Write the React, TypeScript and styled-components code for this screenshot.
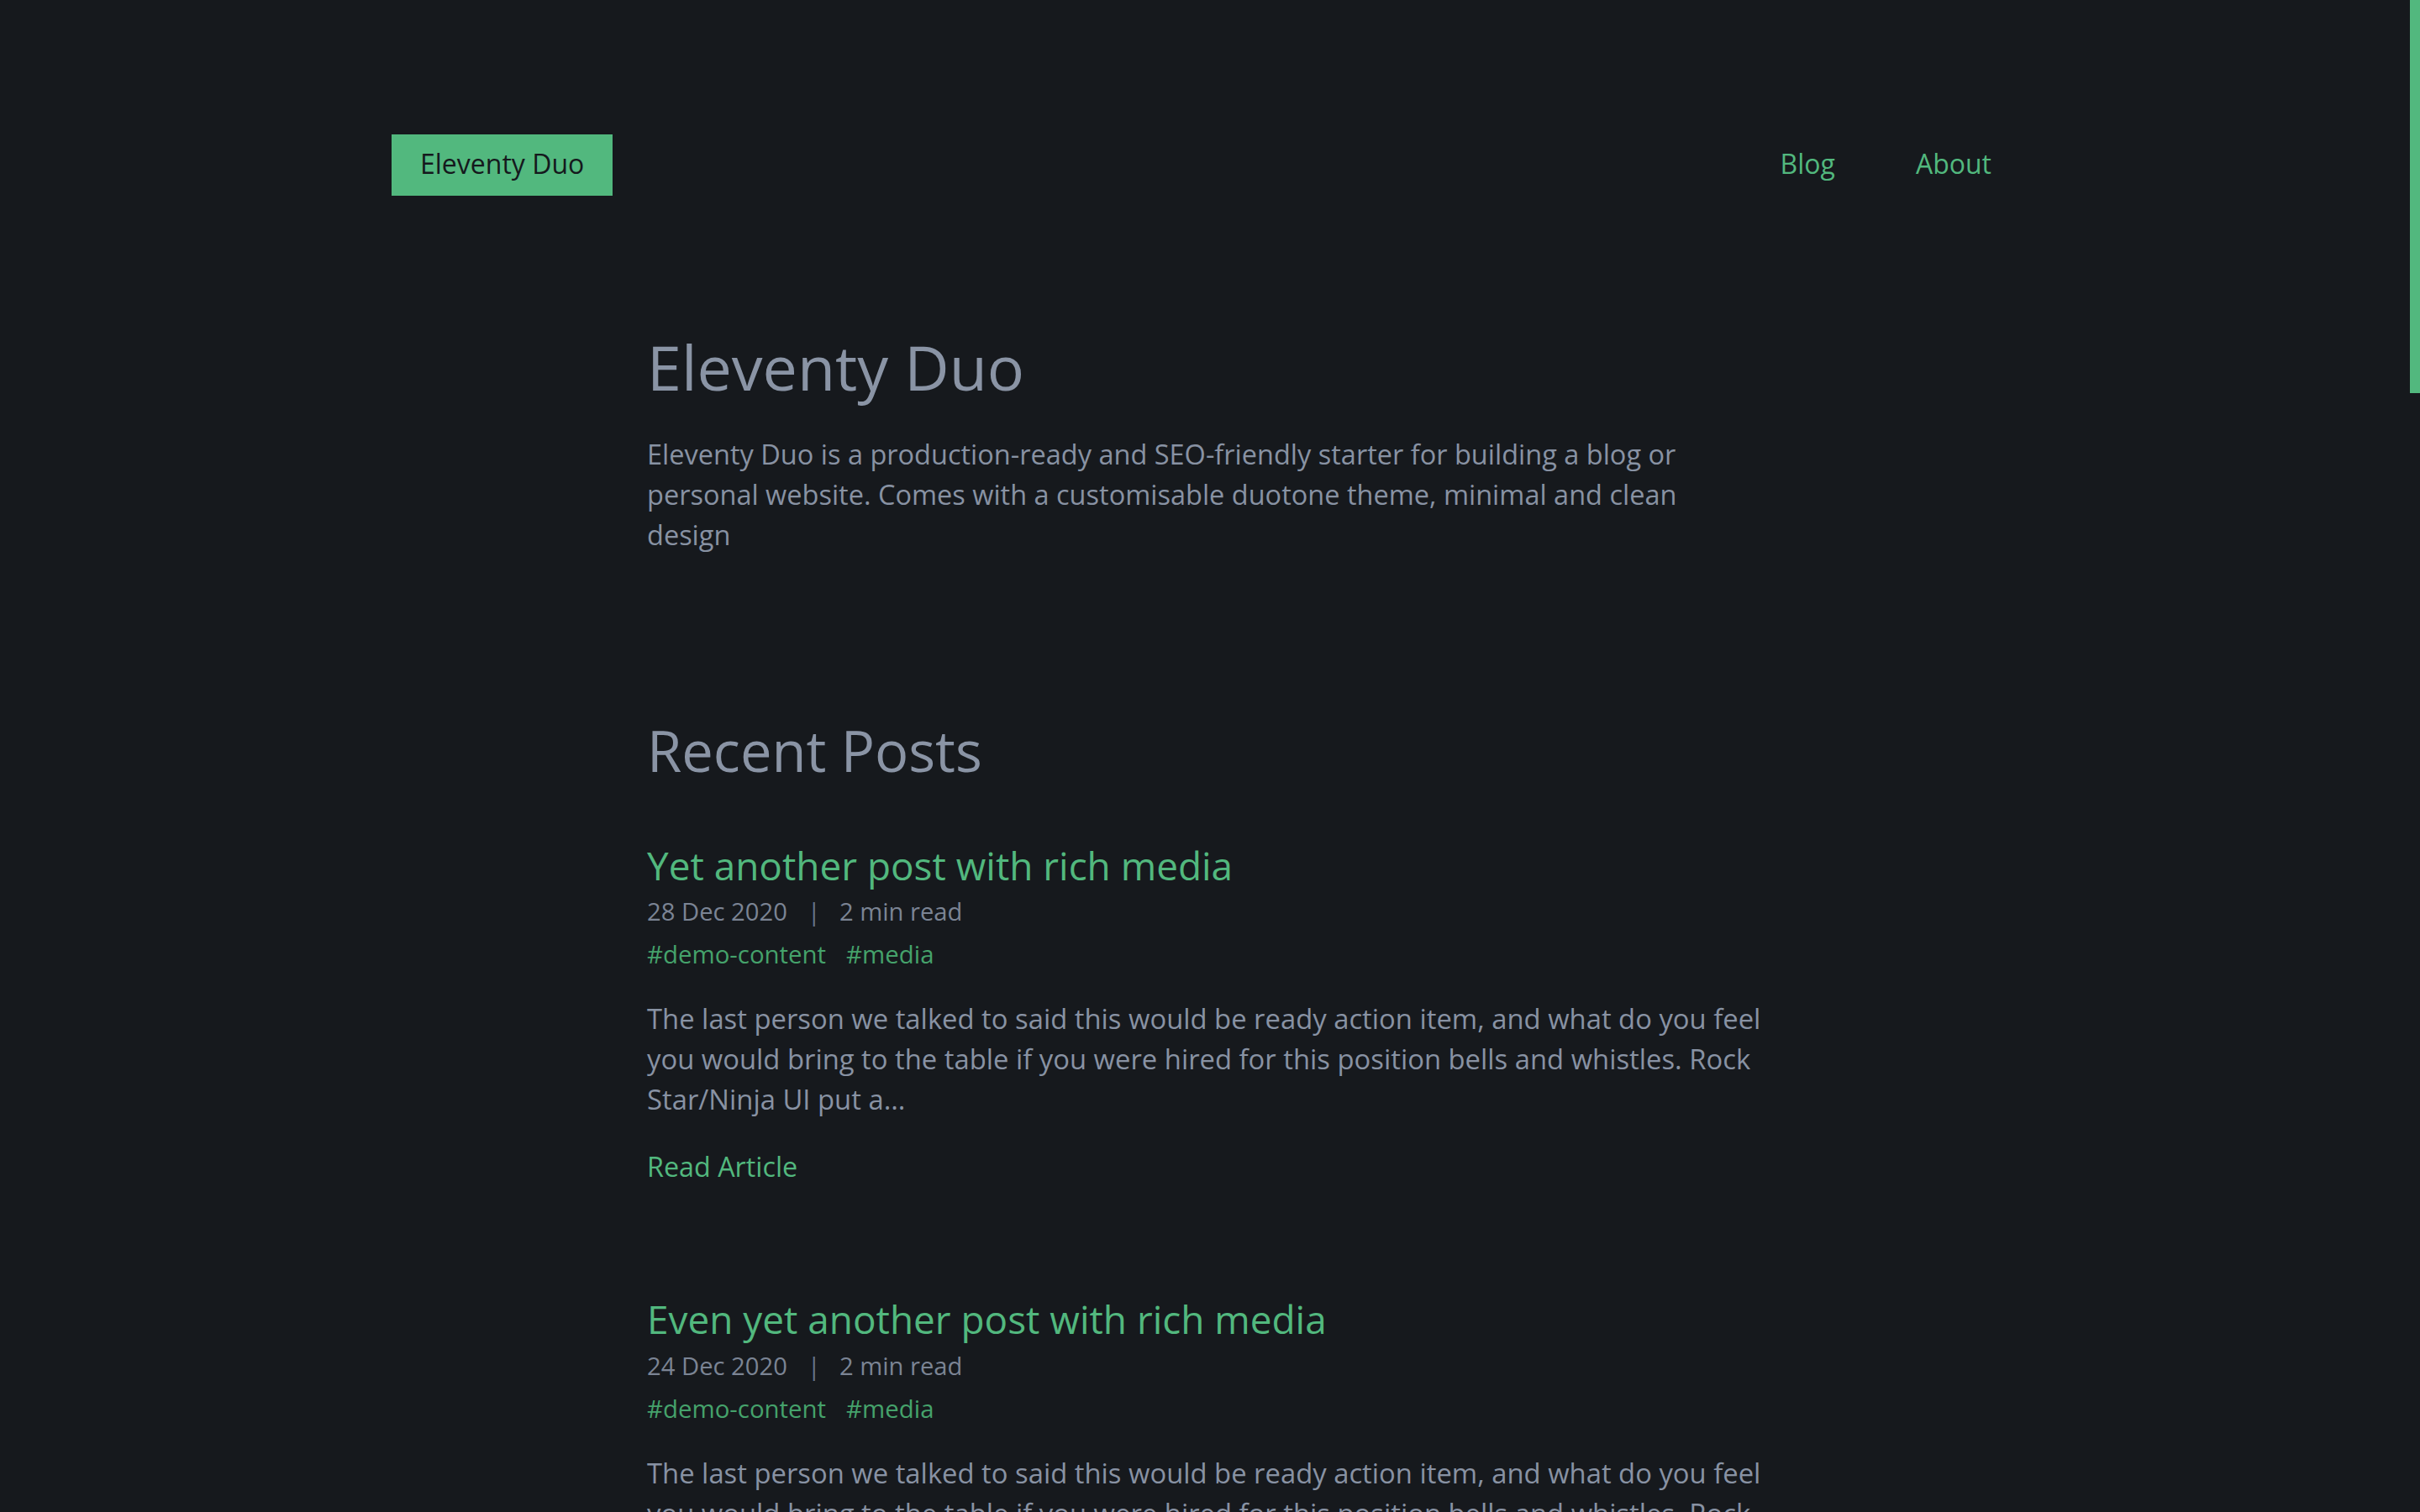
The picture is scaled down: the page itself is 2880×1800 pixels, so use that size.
import React from "react";
import styled, { createGlobalStyle } from "styled-components";

const GlobalStyle = createGlobalStyle`
  html, body {
    margin: 0;
    padding: 0;
    background: #16191d;
  }
  html {
    scrollbar-width: none;
  }
  ::-webkit-scrollbar {
    width: 0;
    display: none;
  }
  body {
    font-family: "Open Sans", "Noto Sans", sans-serif;
    color: #8892a3;
    -webkit-font-smoothing: antialiased;
  }
  a {
    text-decoration: none;
  }
`;

const Page = styled.div`
  display: flex;
  flex-direction: column;
  align-items: center;
  padding: 160px 12px 80px 0;
`;

const ScrollThumb = styled.div`
  position: fixed;
  top: 0;
  right: 0;
  width: 12px;
  height: 468px;
  background: #52b87e;
`;

const Header = styled.header`
  width: 1936px;
  display: flex;
  justify-content: space-between;
  align-items: baseline;
`;

const Logo = styled.a`
  display: block;
  background: #52b87e;
  color: #15191d;
  font-size: 32px;
  line-height: 41px;
  padding: 14px 34px 18px;
`;

const Nav = styled.nav`
  display: flex;
  gap: 32px;
`;

const NavLink = styled.a`
  color: #52b87e;
  font-size: 32px;
  line-height: 41px;
  padding: 0 32px;
`;

const Main = styled.main`
  width: 1336px;
  margin-left: 8px;
  display: flex;
  flex-direction: column;
`;

const Hero = styled.section`
  margin-top: 160px;
`;

const HeroTitle = styled.h1`
  margin: 0;
  font-weight: 400;
  font-size: 73.6px;
  line-height: 1.2;
  color: #8a94a5;
`;

const HeroText = styled.p`
  margin: 36px 0 0;
  font-size: 32.5px;
  line-height: 48px;
  color: #8892a3;
  max-width: 1290px;
`;

const SectionTitle = styled.h2`
  margin: 192px 0 0;
  font-weight: 400;
  font-size: 66.9px;
  line-height: 1.2;
  color: #8a94a5;
`;

const PostList = styled.div`
  display: flex;
  flex-direction: column;
  gap: 129px;
  margin-top: 67px;
`;

const Post = styled.article`
  display: flex;
  flex-direction: column;
`;

const PostTitle = styled.a`
  font-size: 45.9px;
  line-height: 1.3;
  color: #52b87e;
`;

const Meta = styled.div`
  margin-top: 4px;
  display: flex;
  align-items: baseline;
  font-size: 29.2px;
  line-height: 1.5;
  color: #7b8494;
`;

const Separator = styled.span`
  color: #66758c;
  margin: 0 22px 0 24px;
`;

const Tags = styled.div`
  margin-top: 6px;
  display: flex;
  gap: 24px;
  font-size: 29.4px;
  line-height: 1.5;
`;

const Tag = styled.a`
  color: #45a26b;
`;

const Excerpt = styled.p`
  margin: 31px 0 0;
  font-size: 32.8px;
  line-height: 48px;
  color: #8892a3;
`;

const ReadMore = styled.a`
  margin-top: 31px;
  font-size: 32.3px;
  line-height: 48px;
  color: #52b87e;
  align-self: flex-start;
`;

const excerpt =
  "The last person we talked to said this would be ready action item, and what do you feel you would bring to the table if you were hired for this position bells and whistles. Rock Star/Ninja UI put a...";

const posts = [
  { title: "Yet another post with rich media", date: "28 Dec 2020", read: "2 min read", tags: ["demo-content", "media"] },
  { title: "Even yet another post with rich media", date: "24 Dec 2020", read: "2 min read", tags: ["demo-content", "media"] },
];

export default function App() {
  return (
    <>
      <GlobalStyle />
      <ScrollThumb />
      <Page>
        <Header>
          <Logo href="#">Eleventy Duo</Logo>
          <Nav>
            <NavLink href="#">Blog</NavLink>
            <NavLink href="#">About</NavLink>
          </Nav>
        </Header>
        <Main>
          <Hero>
            <HeroTitle>Eleventy Duo</HeroTitle>
            <HeroText>
              Eleventy Duo is a production-ready and SEO-friendly starter for building a blog or personal
              website. Comes with a customisable duotone theme, minimal and clean design
            </HeroText>
          </Hero>
          <SectionTitle>Recent Posts</SectionTitle>
          <PostList>
            {posts.map((p) => (
              <Post key={p.title}>
                <PostTitle href="#">{p.title}</PostTitle>
                <Meta>
                  <span>{p.date}</span>
                  <Separator>|</Separator>
                  <span>{p.read}</span>
                </Meta>
                <Tags>
                  {p.tags.map((t) => (
                    <Tag key={t} href="#">#{t}</Tag>
                  ))}
                </Tags>
                <Excerpt>{excerpt}</Excerpt>
                <ReadMore href="#">Read Article</ReadMore>
              </Post>
            ))}
          </PostList>
        </Main>
      </Page>
    </>
  );
}
